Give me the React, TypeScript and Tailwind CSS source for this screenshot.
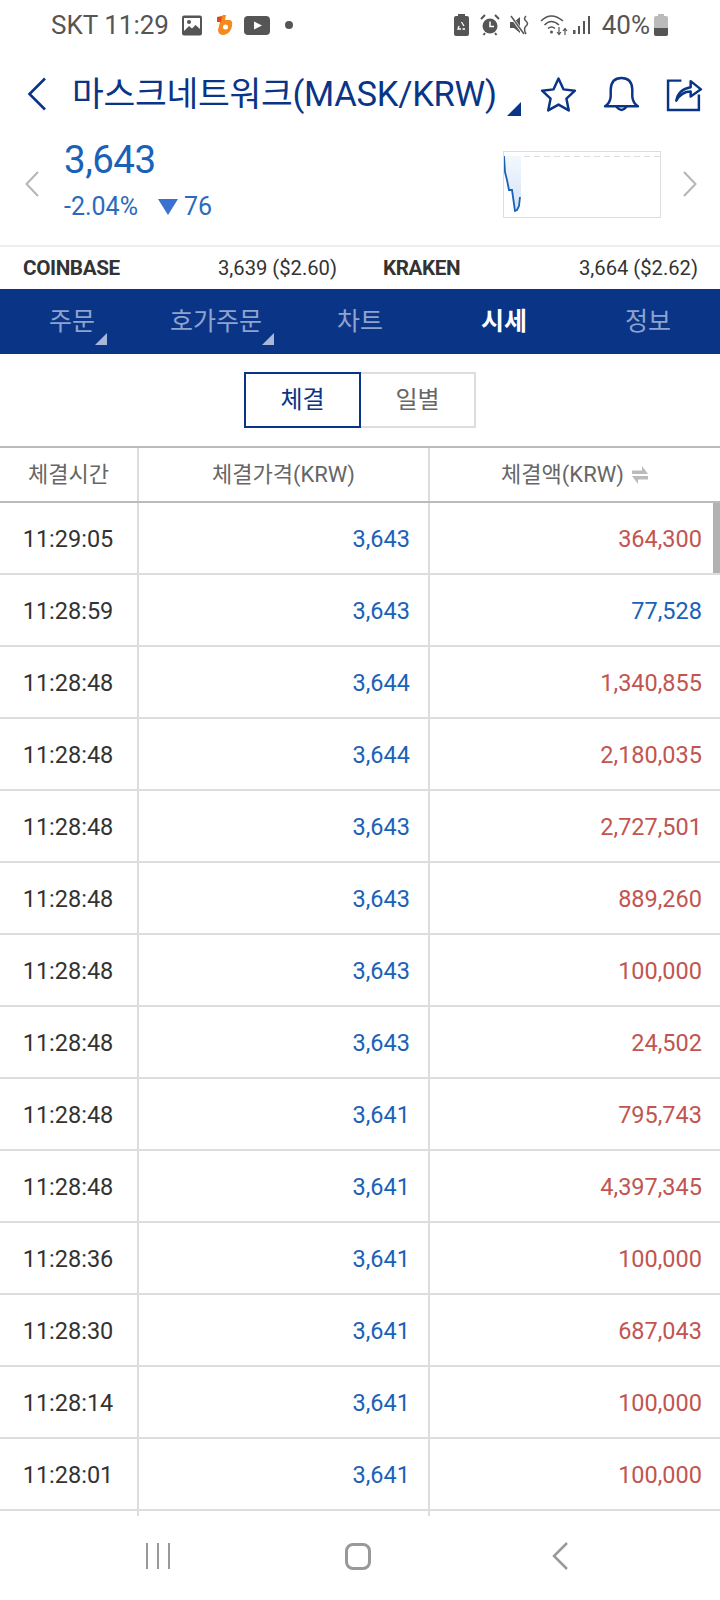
const rows = [
  ['11:29:05', '3,643', '364,300', 'r'],
  ['11:28:59', '3,643', '77,528', 'b'],
  ['11:28:48', '3,644', '1,340,855', 'r'],
  ['11:28:48', '3,644', '2,180,035', 'r'],
  ['11:28:48', '3,643', '2,727,501', 'r'],
  ['11:28:48', '3,643', '889,260', 'r'],
  ['11:28:48', '3,643', '100,000', 'r'],
  ['11:28:48', '3,643', '24,502', 'r'],
  ['11:28:48', '3,641', '795,743', 'r'],
  ['11:28:48', '3,641', '4,397,345', 'r'],
  ['11:28:36', '3,641', '100,000', 'r'],
  ['11:28:30', '3,641', '687,043', 'r'],
  ['11:28:14', '3,641', '100,000', 'r'],
  ['11:28:01', '3,641', '100,000', 'r'],
];

const font = "font-['Roboto','Noto_Sans_CJK_KR',sans-serif]";

function StatusBar() {
  return (
    <div className="h-[50px] flex items-center justify-between pl-[51px] pr-[52px] text-[#555] shrink-0">
      <div className="flex items-center">
        <span className="text-[26px] leading-none">SKT 11:29</span>
        <svg width="21" height="21" viewBox="0 0 21 21" className="ml-[13px]">
          <rect x="0" y="0.5" width="20" height="20" rx="2" fill="#555" />
          <rect x="2" y="3" width="16" height="15" fill="#fff" />
          <circle cx="7" cy="7" r="2" fill="#555" />
          <path d="M2 16 L7 11 L10 13.5 L13.5 10 L18 14 V18 H2Z" fill="#555" />
        </svg>
        <svg width="18" height="22" viewBox="0 0 18 22" className="ml-[13px]">
          <path d="M7 1 L10 1 L9 6 L14 6 Q17 7 16 12 Q15 19 8 21 Q2 21 2 16 L4.500 6 L1 6 L1.500 3 L5 3Z" fill="#f28a1e" />
          <path d="M1 3 L6 2 L5 8 L1 8Z" fill="#e2491c" />
          <circle cx="9.500" cy="13" r="2.500" fill="#fff" />
        </svg>
        <svg width="26" height="19" viewBox="0 0 26 19" className="ml-[10px]">
          <rect width="26" height="19" rx="4" fill="#555" />
          <path d="M10 5.500 L18 9.500 L10 13.500Z" fill="#fff" />
        </svg>
        <span className="w-[8px] h-[8px] rounded-full bg-[#555] ml-[15px]" />
      </div>
      <div className="flex items-center">
        <svg width="15" height="22" viewBox="0 0 15 22">
          <rect x="4" y="0" width="7" height="3" fill="#555" />
          <rect x="0" y="2" width="15" height="20" rx="2" fill="#555" />
          <path d="M7.500 8 L10 12 M5 12 L4 15 H7 M11 15 H8.500" stroke="#fff" strokeWidth="1.300" fill="none" />
        </svg>
        <svg width="20" height="22" viewBox="0 0 20 22" className="ml-[11px]">
          <circle cx="10" cy="12" r="7.500" fill="#555" />
          <path d="M10 7.500 V12.500 H14" stroke="#fff" strokeWidth="1.500" fill="none" />
          <path d="M1 5 L5 1 M19 5 L15 1 M5 19 L3.500 21 M15 19 L16.500 21" stroke="#555" strokeWidth="2" />
        </svg>
        <svg width="21" height="20" viewBox="0 0 21 20" className="ml-[10px]">
          <path d="M0 7 H4 L10 2 V18 L4 13 H0Z" fill="#555" />
          <path d="M1 1 L13 18" stroke="#fff" strokeWidth="3" />
          <path d="M1 1 L14 19" stroke="#555" strokeWidth="1.500" />
          <path d="M16 1 Q13 4 16 6 Q19 9 16 11 Q13 14 16 19" stroke="#555" strokeWidth="1.500" fill="none" />
        </svg>
        <svg width="28" height="22" viewBox="0 0 28 22" className="ml-[9px]">
          <path d="M1 7 Q11 -3 23 7 M4.500 11 Q11 4 19 11 M8 14.500 Q11.500 11.500 15 14.500" stroke="#555" strokeWidth="1.600" fill="none" />
          <circle cx="11.500" cy="18" r="1.500" fill="#555" />
          <path d="M19 13 V20 M17 18 L19 20.500 L21 18 M25 21 V15 M23 17 L25 14.500 L27 17" stroke="#555" strokeWidth="1.200" fill="none" />
        </svg>
        <svg width="18" height="20" viewBox="0 0 18 20" className="ml-[5px]">
          <rect x="0" y="15" width="2.500" height="4" fill="#555" />
          <rect x="5" y="11" width="2" height="8" fill="#555" />
          <rect x="10" y="6" width="2" height="13" fill="#555" />
          <rect x="15" y="1" width="2" height="18" fill="#555" />
        </svg>
        <span className="text-[26px] leading-none ml-[11px]">40%</span>
        <svg width="14" height="22" viewBox="0 0 14 22" className="ml-[4px]">
          <path d="M4 0 H10 V2 H12 Q14 2 14 4 V20 Q14 22 12 22 H2 Q0 22 0 20 V4 Q0 2 2 2 H4Z" fill="#bbb" />
          <path d="M0 14 H14 V20 Q14 22 12 22 H2 Q0 22 0 20Z" fill="#555" />
        </svg>
      </div>
    </div>
  );
}

function Header() {
  return (
    <div className="h-[88px] flex items-center pl-[27px] shrink-0 text-[#0a3587]">
      <svg width="20" height="34" viewBox="0 0 20 34">
        <path d="M18 1.500 L2.500 17 L18 32.500" stroke="#0a3587" strokeWidth="2.600" fill="none" />
      </svg>
      <div className="relative ml-[25px] w-[449px] h-[44px] flex items-center">
        <span className="text-[34.6px] leading-none tracking-[-0.3px] whitespace-nowrap">마스크네트워크(MASK/KRW)</span>
        <span className="absolute right-0 bottom-0 w-0 h-0 border-l-[14px] border-l-transparent border-b-[14px] border-b-[#0a3587]" />
      </div>
      <svg width="37" height="37" viewBox="0 0 36 36" className="ml-[19px]">
        <path d="M18 2.500 L22.800 13 L34 14.300 L25.700 22 L28 33.500 L18 27.800 L8 33.500 L10.300 22 L2 14.300 L13.200 13Z" stroke="#0a3587" strokeWidth="2.400" fill="none" strokeLinejoin="round" />
      </svg>
      <svg width="37" height="37" viewBox="0 0 36 36" className="ml-[26px]">
        <path d="M2 29.500 Q7 26 7.500 20 V13 Q8 2 18 2 Q28 2 28.500 13 V20 Q29 26 34 29.500Z" stroke="#0a3587" strokeWidth="2.400" fill="none" strokeLinejoin="round" />
        <path d="M13 30 Q18 36 23 30" stroke="#0a3587" strokeWidth="2.400" fill="none" />
      </svg>
      <svg width="37" height="37" viewBox="0 0 36 36" className="ml-[26px]">
        <path d="M15 4.500 H2 V33 H32 V18" stroke="#0a3587" strokeWidth="2.400" fill="none" />
        <path d="M10 24 Q12 13 24 11 V5 L34 13 L24 20 V15 Q15 15 10 24Z" stroke="#0a3587" strokeWidth="2.400" fill="none" strokeLinejoin="round" />
      </svg>
    </div>
  );
}

function PriceRow() {
  return (
    <div className="h-[109px] flex items-center pl-[25px] pr-[23px] pb-[15px] border-b-2 border-[#eee] shrink-0">
      <svg width="14" height="26" viewBox="0 0 14 26">
        <path d="M13 1 L1.500 13 L13 25" stroke="#b5b5b5" strokeWidth="2" fill="none" />
      </svg>
      <div className="ml-[25px] -mt-[9px] flex flex-col text-[#1a62b8]">
        <span className="text-[38.5px] leading-[44px] tracking-[-0.5px]">3,643</span>
        <div className="flex items-center text-[25px] leading-[28px] mt-[11px] text-[#2a6bbd]">
          <span>-2.04%</span>
          <span className="ml-[20px] w-0 h-0 border-l-[10px] border-r-[10px] border-t-[16px] border-l-transparent border-r-transparent border-t-[#3a70cf]" />
          <span className="ml-[6px]">76</span>
        </div>
      </div>
      <div className="ml-auto mr-[22px] w-[158px] h-[67px] border border-[#ddd] relative">
        <svg width="156" height="65" viewBox="0 0 156 65" className="block">
          <defs>
            <linearGradient id="fill" x1="0" y1="0" x2="0" y2="1">
              <stop offset="0" stopColor="#f4f8fd" />
              <stop offset="1" stopColor="#d3e3f7" />
            </linearGradient>
          </defs>
          <line x1="0" y1="4.500" x2="156" y2="4.500" stroke="#ddd" strokeWidth="1" strokeDasharray="6 4" />
          <path d="M0 4 L1 20 L3 28 L5 38 L8 38 L10 52 L12 59 L15 54 L17 45 V4 H0Z" fill="url(#fill)" />
          <path d="M0 4 L1 20 L3 28 L5 38 L8 38 L10 52 L11 59 L13 58 L15 54 L16 45" stroke="#1a62b8" strokeWidth="1.800" fill="none" />
        </svg>
      </div>
      <svg width="14" height="26" viewBox="0 0 14 26">
        <path d="M1 1 L12.500 13 L1 25" stroke="#b5b5b5" strokeWidth="2" fill="none" />
      </svg>
    </div>
  );
}

function Exchanges() {
  return (
    <div className="h-[42px] flex items-center text-[#333] text-[20.2px] shrink-0 pl-[23px] pr-[22px] pt-[1px]">
      <div className="w-[314px] flex justify-between">
        <span className="font-bold tracking-[-0.4px] text-[20.7px]">COINBASE</span>
        <span>3,639 ($2.60)</span>
      </div>
      <div className="ml-[46px] flex-1 flex justify-between">
        <span className="font-bold tracking-[-0.4px] text-[20.7px]">KRAKEN</span>
        <span>3,664 ($2.62)</span>
      </div>
    </div>
  );
}

function Tabs() {
  return (
    <div className="h-[65px] bg-[#0a3587] flex items-center text-[25px] text-[#8ea3cd] shrink-0 pt-[1px]">
      <div className="w-[144px] flex justify-center relative h-full items-center">
        <span>주문</span>
        <span className="absolute left-[95px] bottom-[9px] w-0 h-0 border-l-[12px] border-l-transparent border-b-[12px] border-b-[#a9b8d9]" />
      </div>
      <div className="w-[144px] flex justify-center relative h-full items-center">
        <span>호가주문</span>
        <span className="absolute left-[118px] bottom-[9px] w-0 h-0 border-l-[12px] border-l-transparent border-b-[12px] border-b-[#a9b8d9]" />
      </div>
      <div className="w-[144px] text-center">차트</div>
      <div className="w-[144px] text-center text-white font-bold">시세</div>
      <div className="w-[144px] text-center">정보</div>
    </div>
  );
}

function Toggle() {
  return (
    <div className="h-[94px] flex justify-center items-start pt-[18px] text-[24px] shrink-0 border-b-2 border-[#bbb]">
      <div className="w-[117px] h-[56px] border-2 border-[#0a3587] text-[#0a3587] flex items-center justify-center">체결</div>
      <div className="w-[115px] h-[56px] border-2 border-l-0 border-[#ddd] text-[#666] flex items-center justify-center">일별</div>
    </div>
  );
}

export default function App() {
  return (
    <div className={`${font} w-[720px] h-[1600px] bg-white flex flex-col overflow-hidden`}>
      <StatusBar />
      <Header />
      <PriceRow />
      <Exchanges />
      <Tabs />
      <Toggle />
      <div className="relative flex-1 overflow-hidden">
        <div className="h-[55px] flex items-center text-[22px] text-[#666] border-b-2 border-[#bbb]">
          <div className="w-[139px] h-full flex items-center justify-center border-r-2 border-[#ddd]">체결시간</div>
          <div className="w-[291px] h-full flex items-center justify-center border-r-2 border-[#ddd]">체결가격(KRW)</div>
          <div className="flex-1 h-full flex items-center justify-center">
            체결액(KRW)
            <svg width="18" height="20" viewBox="0 0 18 20" className="ml-[7px]">
              <path d="M1 5.500 H11 V1 L17 9 H1Z M17 11 V14.500 H7 V19 L1 11Z" fill="#bbb" />
            </svg>
          </div>
        </div>
        {rows.map((r, i) => (
          <div key={i} className="h-[72px] flex items-stretch text-[23.5px] border-b-2 border-[#ddd]">
            <div className="w-[139px] shrink-0 flex items-center justify-center text-[#333] border-r-2 border-[#ddd] pr-[1px] pt-[4px]">{r[0]}</div>
            <div className="w-[291px] shrink-0 flex items-center justify-end text-[#1a62b8] border-r-2 border-[#ddd] pr-[18px] pt-[4px]">{r[1]}</div>
            <div className={`flex-1 flex items-center justify-end pr-[18px] pt-[4px] ${r[3] === 'r' ? 'text-[#c25550]' : 'text-[#1a62b8]'}`}>{r[2]}</div>
          </div>
        ))}
        <div className="flex h-[8px]">
          <div className="w-[139px] border-r-2 border-[#ddd]" />
          <div className="w-[291px] border-r-2 border-[#ddd]" />
        </div>
        <div className="absolute top-[55px] right-0 w-[7px] h-[70px] bg-[#b2b2b2]" />
      </div>
      <div className="h-[84px] flex items-center shrink-0 pb-[4px]">
        <div className="w-[144px] ml-[86px] flex justify-center gap-[9px]">
          <span className="w-[2px] h-[26px] bg-[#999]" />
          <span className="w-[2px] h-[26px] bg-[#999]" />
          <span className="w-[2px] h-[26px] bg-[#999]" />
        </div>
        <div className="w-[26px] h-[27px] ml-[115px] border-[3px] border-[#999] rounded-[8px]" />
        <svg width="18" height="28" viewBox="0 0 18 28" className="ml-[180px]">
          <path d="M16 1 L3 14 L16 27" stroke="#999" strokeWidth="2.500" fill="none" />
        </svg>
      </div>
    </div>
  );
}
